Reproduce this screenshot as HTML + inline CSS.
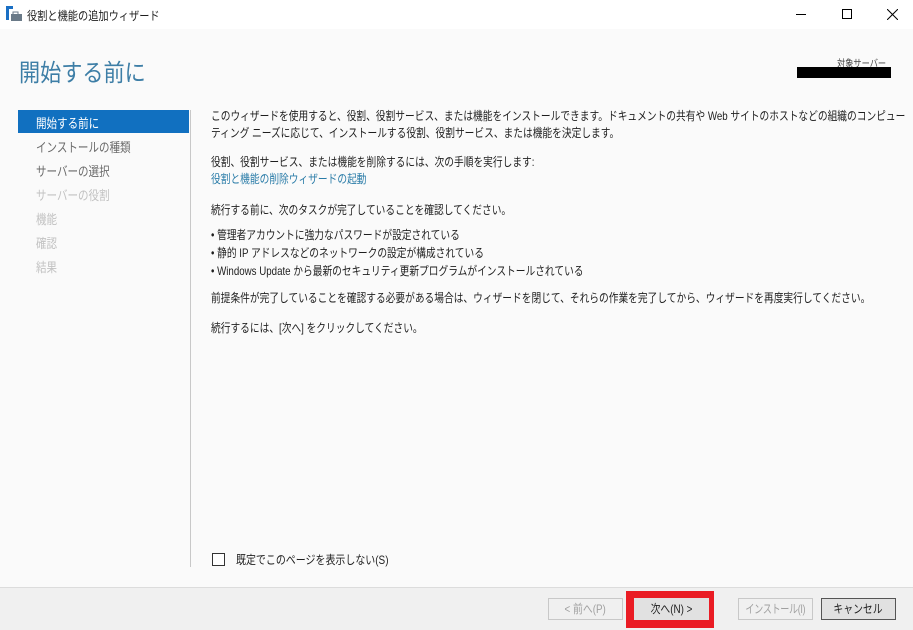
<!DOCTYPE html>
<html><head><meta charset="utf-8"><style>
*{margin:0;padding:0;box-sizing:border-box}
body{width:913px;height:630px;background:#fafafa;font-family:"Liberation Sans","Noto Sans CJK JP",sans-serif;font-size:12px;color:#1e1e1e;position:relative;overflow:hidden}
.abs{position:absolute;white-space:nowrap;transform-origin:left top}
.tb{position:absolute;left:0;top:0;width:913px;height:29px;background:#fff}
.nav{position:absolute;left:36px;font-size:13px;color:#9a9a9a;white-space:nowrap;transform:scaleX(.81);transform-origin:left top}
.btn{position:absolute;top:598px;height:22px;border:1px solid #adadad;background:#e1e1e1;font-size:12px;text-align:center;line-height:20px;white-space:nowrap;overflow:hidden}
.btn span{display:inline-block;transform:scaleX(.82)}
.sc{transform:scaleX(.81)}
</style></head><body>
<div class="tb"></div>
<svg class="abs" style="left:6px;top:6px" width="16" height="16"><rect x="0" y="0" width="3" height="14" fill="#1a6fc4"/><rect x="0" y="0" width="7" height="3" fill="#1a6fc4"/><rect x="5" y="8" width="11" height="7" fill="#6a7a88"/><rect x="7" y="6" width="5" height="3" fill="none" stroke="#6a7a88"/></svg>
<div class="abs" style="left:27px;top:7px;font-size:12px;transform:scaleX(.85)">役割と機能の追加ウィザード</div>
<div class="abs" style="left:796px;top:14px;width:10px;height:1px;background:#000"></div>
<div class="abs" style="left:842px;top:9px;width:10px;height:10px;border:1px solid #000"></div>
<svg class="abs" style="left:887px;top:9px" width="11" height="11"><path d="M0 0L11 11M11 0L0 11" stroke="#000" stroke-width="1"/></svg>
<div class="abs" style="left:19px;top:53px;font-size:24px;color:#3d7ea6;transform:scaleX(.88)">開始する前に</div>
<div class="abs" style="left:837px;top:55px;font-size:10px;color:#444;transform:scaleX(.82)">対象サーバー</div>
<div class="abs" style="left:797px;top:67px;width:94px;height:11px;background:#000"></div>
<div class="abs" style="left:18px;top:110px;width:171px;height:23px;background:#1170c0"></div>
<div class="nav" style="top:113px;color:#fff">開始する前に</div>
<div class="nav" style="top:137px;color:#6a6a6a">インストールの種類</div>
<div class="nav" style="top:161px;color:#6a6a6a">サーバーの選択</div>
<div class="nav" style="top:185px;color:#c2c2c2">サーバーの役割</div>
<div class="nav" style="top:209px;color:#c2c2c2">機能</div>
<div class="nav" style="top:233px;color:#c2c2c2">確認</div>
<div class="nav" style="top:257px;color:#c2c2c2">結果</div>
<div class="abs" style="left:190px;top:110px;width:1px;height:457px;background:#c8c8c8"></div>
<div class="abs sc" style="left:211px;top:108px;line-height:17px">このウィザードを使用すると、役割、役割サービス、または機能をインストールできます。ドキュメントの共有や Web サイトのホストなどの組織のコンピュー<br>ティング ニーズに応じて、インストールする役割、役割サービス、または機能を決定します。</div>
<div class="abs sc" style="left:211px;top:154px;line-height:17px">役割、役割サービス、または機能を削除するには、次の手順を実行します:<br><span style="color:#2a7ca8">役割と機能の削除ウィザードの起動</span></div>
<div class="abs sc" style="left:211px;top:201px">続行する前に、次のタスクが完了していることを確認してください。</div>
<div class="abs sc" style="left:211px;top:226px;line-height:18px">•&nbsp;管理者アカウントに強力なパスワードが設定されている<br>•&nbsp;静的 IP アドレスなどのネットワークの設定が構成されている<br>•&nbsp;Windows Update から最新のセキュリティ更新プログラムがインストールされている</div>
<div class="abs sc" style="left:211px;top:289px">前提条件が完了していることを確認する必要がある場合は、ウィザードを閉じて、それらの作業を完了してから、ウィザードを再度実行してください。</div>
<div class="abs sc" style="left:211px;top:319px">続行するには、[次へ] をクリックしてください。</div>
<div class="abs" style="left:212px;top:553px;width:13px;height:13px;border:1px solid #333;background:#fff"></div>
<div class="abs" style="left:236px;top:551px;transform:scaleX(.83)">既定でこのページを表示しない(S)</div>
<div class="abs" style="left:0;top:587px;width:913px;height:43px;background:#f0f0f0;border-top:1px solid #dcdcdc"></div>
<div class="btn" style="left:548px;width:75px;color:#a0a0a0;background:#f0f0f0;border-color:#c8c8c8"><span>&lt; 前へ(P)</span></div>
<div class="abs" style="left:626px;top:591px;width:88px;height:37px;background:#ea1c24"></div>
<div class="btn" style="left:634px;width:75px;border-color:#e1e1e1"><span>次へ(N) &gt;</span></div>
<div class="btn" style="left:738px;width:75px;color:#a0a0a0;background:#f0f0f0;border-color:#c8c8c8;letter-spacing:-0.5px"><span style="transform:scaleX(.76);margin-left:-20px;margin-right:-20px">インストール(I)</span></div>
<div class="btn" style="left:821px;width:75px;border-color:#555"><span>キャンセル</span></div>
</body></html>
